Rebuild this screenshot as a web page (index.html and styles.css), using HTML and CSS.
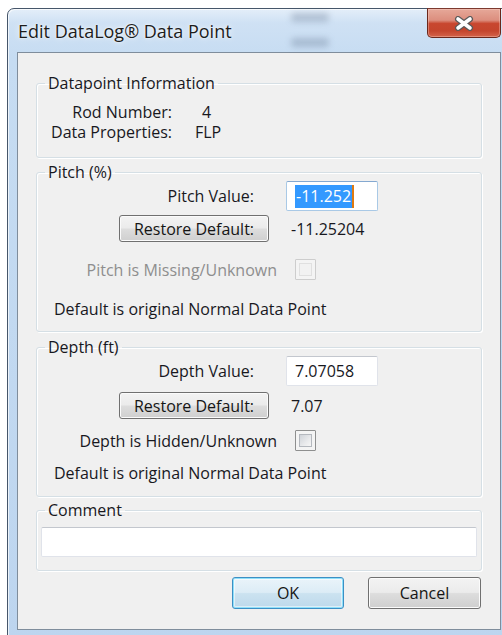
FILE: index.html
```html
<!DOCTYPE html>
<html lang="en">
<head>
<meta charset="utf-8">
<title>Edit DataLog® Data Point</title>
<link rel="stylesheet" href="styles.css">
</head>
<body>
<div class="window">
  <div class="titlebar">
    <span class="glass-smudge smudge-top"></span>
    <span class="glass-smudge smudge-bottom"></span>
    <span class="title">Edit DataLog® Data Point</span>
    <button class="close" type="button" aria-label="Close">
      <svg width="20" height="15" viewBox="0 0 20 15" aria-hidden="true">
        <g stroke-linecap="round">
          <path d="M4 3 L16 12 M16 3 L4 12" stroke="#5a5a5a" stroke-width="6"/>
          <path d="M4 3 L16 12 M16 3 L4 12" stroke="#ffffff" stroke-width="3.6"/>
        </g>
      </svg>
    </button>
  </div>

  <div class="client">
    <fieldset class="group group-info">
      <legend>Datapoint Information</legend>
      <div class="info-grid">
        <span class="key">Rod Number:</span><span class="val val-rod">4</span>
        <span class="key">Data Properties:</span><span class="val">FLP</span>
      </div>
    </fieldset>

    <fieldset class="group group-pitch">
      <legend>Pitch (%)</legend>
      <div class="row row-value">
        <span class="lbl">Pitch Value:</span>
        <div class="edit edit-focused"><span class="selection">-11.252</span><span class="caret"></span></div>
      </div>
      <div class="row row-restore">
        <button class="btn btn-restore" type="button">Restore Default:</button>
        <span class="default-val">-11.25204</span>
      </div>
      <div class="row row-check is-disabled">
        <span class="lbl">Pitch is Missing/Unknown</span>
        <span class="check"><span class="check-inner"></span></span>
      </div>
      <p class="note">Default is original Normal Data Point</p>
    </fieldset>

    <fieldset class="group group-depth">
      <legend>Depth (ft)</legend>
      <div class="row row-value">
        <span class="lbl">Depth Value:</span>
        <div class="edit"><span class="edit-text">7.07058</span></div>
      </div>
      <div class="row row-restore">
        <button class="btn btn-restore" type="button">Restore Default:</button>
        <span class="default-val">7.07</span>
      </div>
      <div class="row row-check">
        <span class="lbl">Depth is Hidden/Unknown</span>
        <span class="check"><span class="check-inner"></span></span>
      </div>
      <p class="note">Default is original Normal Data Point</p>
    </fieldset>

    <fieldset class="group group-comment">
      <legend>Comment</legend>
      <div class="edit edit-comment"></div>
    </fieldset>

    <div class="actions">
      <button class="btn btn-default" type="button">OK</button>
      <button class="btn btn-cancel" type="button">Cancel</button>
    </div>
  </div>
</div>
</body>
</html>
```

FILE: styles.css
```css
* {
  box-sizing: border-box;
}

html,
body {
  margin: 0;
  padding: 0;
}

body {
  width: 502px;
  height: 635px;
  overflow: hidden;
  background: #ffffff;
  font-family: "Open Sans", "Noto Sans", sans-serif;
  font-size: 16px;
  color: #18181e;
}

/* ---------- window frame (Aero glass) ---------- */
.window {
  margin: 8px 0 0 7px;
  width: 504px;
  height: 640px;
  padding: 0 9px;
  border: 1px solid #46566a;
  border-radius: 7px 7px 0 0;
  background: linear-gradient(180deg, #e4eef9 0, #cfe1f4 14px, #c6dcf2 48px, #bdd5ef 100%);
  box-shadow: inset 1px 1px 0 rgba(255, 255, 255, 0.7);
}

.titlebar {
  position: relative;
  height: 43px;
  display: flex;
  align-items: flex-start;
}

.glass-smudge {
  position: absolute;
  left: 274px;
  width: 38px;
  height: 9px;
  border-radius: 4px;
  background: rgba(70, 90, 115, 0.26);
  filter: blur(3px);
}

.smudge-top {
  top: 4px;
}

.smudge-bottom {
  top: 29px;
}

.title {
  position: relative;
  margin: 11px 0 0 1px;
  font-size: 18px;
  line-height: 22px;
  color: #1c1c1c;
  text-shadow: 0 0 6px rgba(255, 255, 255, 0.9), 0 0 2px rgba(255, 255, 255, 0.9);
}

.close {
  position: relative;
  margin: -1px 0 0 auto;
  width: 74px;
  height: 30px;
  padding: 0;
  display: flex;
  align-items: center;
  justify-content: center;
  border: 1px solid #6a271c;
  border-top-color: #7c3a30;
  border-radius: 0 0 5px 5px;
  background: linear-gradient(180deg, #e6a899 0%, #dc8e7e 40%, #c8472f 52%, #c4452d 78%, #d4634a 100%);
  box-shadow: inset 0 0 0 1px rgba(255, 220, 210, 0.35);
}

/* ---------- client area ---------- */
.client {
  width: 484px;
  height: 578px;
  padding: 21px 18px 0;
  border: 1px solid #7f8d9c;
  background: #f0f0f0;
  display: flex;
  flex-direction: column;
}

.group {
  margin: 0;
  padding: 0;
  min-width: 0;
  border: 1px solid #d5dfe5;
  border-radius: 3px;
  box-shadow: 1px 1px 0 #ffffff, inset 1px 1px 0 #ffffff;
}

.group legend {
  margin-left: 8px;
  padding: 0 3px;
  line-height: 18px;
}

.group-info {
  padding-bottom: 15px;
}

.info-grid {
  margin-top: 10px;
  display: grid;
  grid-template-columns: 135px auto;
  column-gap: 23px;
  line-height: 20px;
}

.key {
  text-align: right;
}

.val-rod {
  padding-left: 7px;
}

.group-pitch {
  margin-top: 5px;
  padding-bottom: 12px;
}

.group-depth {
  margin-top: 6px;
  padding-bottom: 13px;
}

.group-comment {
  margin-top: 4px;
  padding-bottom: 13px;
}

/* ---------- rows ---------- */
.row {
  display: flex;
  align-items: center;
  line-height: 20px;
}

.row-value {
  height: 30px;
}

.row-value .lbl {
  width: 217px;
  text-align: right;
}

.row-value .edit {
  margin-left: 32px;
  width: 92px;
}

.row-restore {
  height: 27px;
}

.group-pitch .row-restore {
  margin-top: 4px;
}

.group-depth .row-restore {
  margin-top: 6px;
}

.default-val {
  margin-left: 22px;
}

.row-check {
  height: 21px;
}

.group-pitch .row-check {
  margin-top: 17px;
}

.group-depth .row-check {
  margin-top: 11px;
}

.row-check .lbl {
  width: 240px;
  text-align: right;
}

.row-check.is-disabled .lbl {
  color: #8e8e8e;
}

.note {
  margin: 0 0 0 17px;
  line-height: 20px;
}

.group-pitch .note {
  margin-top: 19px;
}

.group-depth .note {
  margin-top: 12px;
}

/* ---------- edit boxes ---------- */
.edit {
  height: 30px;
  padding: 0 0 0 8px;
  display: flex;
  align-items: center;
  background: #ffffff;
  border: 1px solid #e0e3ea;
  border-top-color: #c3c7ce;
  border-radius: 2px;
}

.edit-focused {
  border-color: #a9c9e6;
  border-top-color: #84a8d0;
}

.selection {
  padding: 0 1px;
  line-height: 23px;
  background: #3399ff;
  color: #ffffff;
}

.caret {
  width: 2px;
  height: 23px;
  background: #e07a10;
}

.edit-comment {
  margin: 8px 4px 0;
}

/* ---------- check boxes ---------- */
.check {
  margin-left: 18px;
  width: 21px;
  height: 21px;
  padding: 3px;
  border: 1px solid #8e8f8f;
  background: #f4f4f4;
  border-radius: 1px;
}

.check-inner {
  display: block;
  width: 100%;
  height: 100%;
  border: 1px solid #b4b8be;
  background: linear-gradient(135deg, #cfd3d8 0%, #e9eaec 60%, #f6f6f6 100%);
}

.is-disabled .check {
  border-color: #cdcdcd;
}

.is-disabled .check-inner {
  border-color: #e0e0e0;
  background: #f2f2f2;
}

/* ---------- push buttons ---------- */
.btn {
  padding: 0;
  font: inherit;
  line-height: 20px;
  color: #151515;
  text-align: center;
  border: 1px solid #707070;
  border-radius: 3px;
  background: linear-gradient(180deg, #f3f3f3 0%, #ebebeb 48%, #dddddd 52%, #cfcfcf 100%);
  box-shadow: inset 0 0 0 1px #fbfbfb;
}

.btn-restore {
  margin-left: 82px;
  width: 150px;
  height: 27px;
}

.actions {
  margin: 6px 1px 0 0;
  display: flex;
  justify-content: flex-end;
  gap: 24px;
}

.btn-default {
  width: 112px;
  height: 32px;
  border-color: #3c8fc4;
  background: linear-gradient(180deg, #eaf4fa 0%, #dcecf6 48%, #cbe2f0 52%, #bdd9eb 100%);
  box-shadow: inset 0 0 0 1px #8fe0fa, inset 0 0 0 2px rgba(255, 255, 255, 0.5);
}

.btn-cancel {
  width: 113px;
  height: 32px;
}
```
